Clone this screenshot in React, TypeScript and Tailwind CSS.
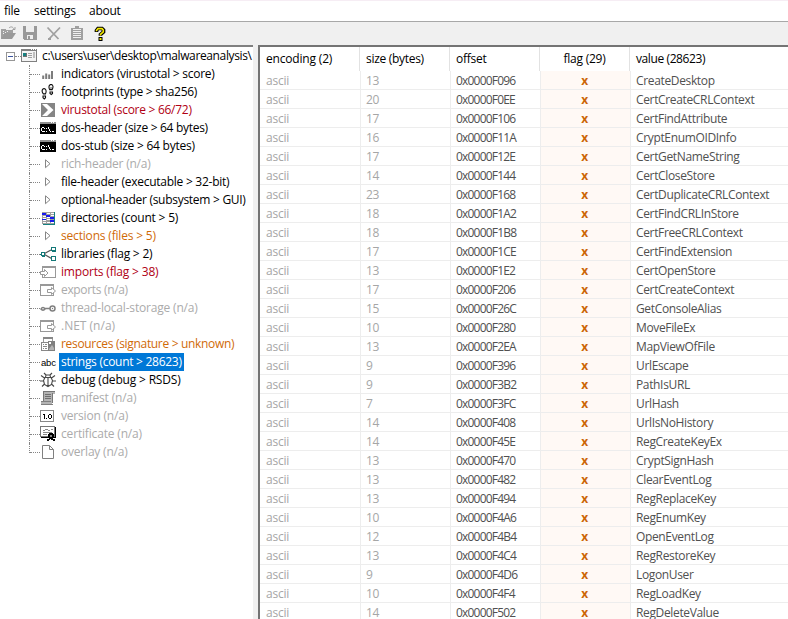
import type { ReactNode } from "react";

const GRAY = "#a0a0a0";

function Svg({ children, crisp = true }: { children: ReactNode; crisp?: boolean }) {
  return (
    <svg width="16" height="16" viewBox="0 0 16 16" fill="none" className="block shrink-0" shapeRendering={crisp ? "crispEdges" : "auto"}>
      {children}
    </svg>
  );
}

function WindowIcon() {
  return (
    <Svg>
      <rect x="0.5" y="1.5" width="15" height="12" fill="#f4f4f4" stroke="#808080" />
      <path d="M0 1h16v2H0z" fill="#808080" />
      <path d="M10 1h1v1h-1zM12 1h1v1h-1zM14 1h1v1h-1z" fill="#fff" />
      <path d="M2 5h3v3H2z" fill="#168080" />
      <path d="M5 5h1v3H5zM2 8h4v1H2z" fill="#707070" />
      <path d="M7 5h4v1H7zM7 7h4v1H7zM7 9h4v1H7z" fill="#a0a0a0" />
      <path d="M12 4h2v6h-2z" fill="#c0c0c0" />
    </Svg>
  );
}
function BarsIcon() {
  return (
    <Svg crisp={false}>
      <path d="M2.2 9.5h2V13h-2zM5.2 7.5h2V13h-2zM8.2 8.5h2V13h-2zM11 5h2v8h-2z" fill="#7c7c7c" />
    </Svg>
  );
}
function FootIcon() {
  return (
    <Svg crisp={false}>
      <path d="M2.8 5.2c-1 1.2-.8 3 .5 4.7h2.2c.8-1.8.9-3.5-.2-4.7-.8-.8-1.8-.8-2.5 0zM3 12h2.5v1.7L4.3 15 3 13.7zM9.8 1c-1.1 1-1 2.8-.2 4.6h2.5c1-1.7 1.2-3.5.2-4.6-.8-.7-1.8-.7-2.5 0zM10 8h2.5v1.5l-1.2 1L10 9.5z" stroke="#111" strokeWidth="1.1" />
      <path d="M10 3h2v2h-2z" fill="#aaa" />
    </Svg>
  );
}
function VtIcon() {
  return (
    <Svg crisp={false}>
      <path d="M1 1h14v14H1z" fill="#858585" />
      <path d="M2 2h5l6.5 6L7 14H2l6-6z" fill="#fff" />
    </Svg>
  );
}
function DosIcon() {
  return (
    <Svg>
      <path d="M0 2h16v12H0z" fill="#000" />
      <path d="M0 2h16v2H0z" fill="#909090" />
      <path d="M11 2h1v1h-1zM13 2h1v1h-1z" fill="#fff" />
      <path d="M2 7h2v1H2zM1 8h1v3H1zM2 11h3v1H2zM4 8h1v1H4zM6 8h1v1H6zM6 11h1v1H6zM8 7h1v2H8zM9 9h1v2H9zM10 11h1v1h-1zM12 11h2v1h-2z" fill="#fff" />
    </Svg>
  );
}
function TriIcon() {
  return (
    <Svg crisp={false}>
      <path d="M5.5 3.8v7.9l4.5-4z" stroke="#858585" strokeWidth="1" fill="#fff" />
    </Svg>
  );
}
function DirIcon() {
  return (
    <Svg>
      <path d="M2 2h13v12H2z" fill="#a0a0a0" />
      <path d="M3 6h3v1H3zM3 8h3v1H3zM3 10h3v1H3zM3 12h3v1H3zM7 3h3v1H7zM7 7h3v1H7zM7 9h3v1H7zM7 12h3v1H7zM11 3h3v1h-3zM11 5h3v1h-3zM11 12h3v1h-3z" fill="#fff" />
      <path d="M2 3h4v2H2zM6 5h4v2H6zM2 9h4v1H2zM10 7h4v2h-4zM10 10h4v2h-4z" fill="#1818ee" />
      <path d="M14 2h1v13H3v-1h11z" fill="#178080" />
    </Svg>
  );
}
function LibIcon() {
  return (
    <Svg>
      <path d="M4.5 7.5L11 4M4.5 8.5l7 4" stroke="#555" strokeWidth="1.3" shapeRendering="auto" />
      <path d="M1.5 6.5h3v3h-3zM11.5 1.5h4v3h-4zM11.5 10.5h4v4h-4z" stroke="#147878" fill="#fff" />
      <path d="M0 8h1v1H0zM12 5h4v1h-4zM2 10h3v1H2z" fill="#147878" />
    </Svg>
  );
}
function ImportIcon() {
  return (
    <Svg>
      <path d="M2.5 2.5h13v11h-13z" stroke="#999" fill="#fff" />
      <path d="M2 2h13v2H2z" fill="#999" />
      <path d="M.5 7.5h4v-2L8 9l-3.5 3.5v-2h-4z" stroke="#999" fill="#fff" shapeRendering="auto" />
    </Svg>
  );
}
function ExportIcon() {
  return (
    <Svg>
      <path d="M.5 2.5h13v11H.5z" stroke="#999" fill="#fff" />
      <path d="M0 2h14v2H0z" fill="#999" />
      <path d="M7.5 7.5h4v-2L15.5 9l-4 3.5v-2h-4z" stroke="#999" fill="#fff" shapeRendering="auto" />
    </Svg>
  );
}
function TlsIcon() {
  return (
    <Svg crisp={false}>
      <path d="M1 9c1-2 3-2 4 0-1 1.5-3 1.5-4 0zM5 8.5h5" stroke="#808080" strokeWidth="1.5" />
      <circle cx="12.5" cy="8.5" r="2.5" stroke="#808080" strokeWidth="1.5" />
      <circle cx="12.5" cy="8.5" r="0.7" fill="#808080" />
    </Svg>
  );
}
function ResIcon() {
  return (
    <Svg>
      <path d="M3.5 1.5h9v6h-9z" stroke="#999" fill="#fff" />
      <path d="M3 1h10v2H3z" fill="#888" />
      <path d="M1.5 6.5h7v8h-7z" stroke="#888" fill="#fff" />
      <path d="M3 8h1v1H3zM5 8h2v1H5zM3 10h4v1H3zM3 12h1v1H3zM5 12h2v1H5z" fill="#888" />
      <path d="M8 5h7v10H8z" fill="#808080" />
      <path d="M9 13l3-4 2 3v2H9z" fill="#b4b4b4" shapeRendering="auto" />
      <path d="M9 6h2v2H9z" fill="#fff" />
    </Svg>
  );
}
function AbcIcon() {
  return (
    <span className="block w-4 shrink-0 whitespace-nowrap pl-px pt-px font-['Liberation_Sans',sans-serif] text-[9.5px] leading-4 tracking-[-0.2px] text-black">abc</span>
  );
}
function BugIcon() {
  return (
    <Svg crisp={false}>
      <path d="M5 5.5h6l1.500 3-1 4-3.500 2-3.500-2-1-4zM5.500 5L6 3h4l.5 2M6 3L4 1M10 3l2-2M8 6v8M4.500 6L1 3.500M11.500 6L15 3.500M3.500 9H0M12.500 9H16M4.500 12L2 14.500M11.500 12l2.500 2.500" stroke="#484848" strokeWidth="1.1" />
    </Svg>
  );
}
function ManifestIcon() {
  return (
    <Svg>
      <path d="M3 1h12v3h-2v7H3z" fill="#b4b4b4" />
      <path d="M3 1h12v1H3zM3 2h1v9H3zM12 3h1v10h-1z" fill="#777" />
      <path d="M5 4h6v1H5zM5 6h6v1H5zM5 8h6v1H5z" fill="#707070" />
      <path d="M1 11h11v3H1z" fill="#b4b4b4" />
      <path d="M1 11h10v1H1zM1 14h12v1H1z" fill="#808080" />
    </Svg>
  );
}
function VersionIcon() {
  return (
    <Svg>
      <path d="M.5 2.5h13v11H.5z" fill="#fff" stroke="#888" />
      <path d="M3 6h2v5H4V7H3zM6 10h1v1H6zM9 6h2v1H9zM8 7h1v3H8zM11 7h1v3h-1zM9 10h2v1H9z" fill="#000" />
    </Svg>
  );
}
function CertIcon() {
  return (
    <Svg>
      <path d="M.5 .5h14v10H.5z" fill="#fff" stroke="#777" />
      <path d="M15 1h1v11h-1zM1 11h15v1H1z" fill="#000" />
      <path d="M3 4h2v1H3zM5 3h3v1H5zM8 4h2v1H8zM11 3h2v1h-2zM3 6h9v1H3zM3 8h4v1H3z" fill="#888" />
      <path d="M9 7h4v1h1v4h-1v1h2v2h-2v-1h-2v-1h-1v1H9v1H7v-2h2v-1H8V8h1z" fill="#000" />
      <path d="M10 9h2v2h-2z" fill="#888" />
    </Svg>
  );
}
function PageIcon() {
  return (
    <Svg crisp={false}>
      <path d="M2.5 1.5h7l4 4v9h-11zM9.5 1.5v4h4" fill="#fff" stroke="#808080" />
    </Svg>
  );
}

type Node = [string, () => ReactNode, string, string];
const BLACK = "text-black";
const DIM = "text-[#ababab]";
const RED = "text-[#b00014]";
const ORANGE = "text-[#d06a08]";

const nodes: Node[] = [
  ["indicators (virustotal > score)", BarsIcon, BLACK, "tracking-[-0.25px]"],
  ["footprints (type > sha256)", FootIcon, BLACK, "tracking-[-0.28px]"],
  ["virustotal (score > 66/72)", VtIcon, RED, "tracking-[-0.28px]"],
  ["dos-header (size > 64 bytes)", DosIcon, BLACK, "tracking-[-0.3px]"],
  ["dos-stub (size > 64 bytes)", DosIcon, BLACK, "tracking-[-0.25px]"],
  ["rich-header (n/a)", TriIcon, DIM, "tracking-[-0.22px]"],
  ["file-header (executable > 32-bit)", TriIcon, BLACK, "tracking-[-0.26px]"],
  ["optional-header (subsystem > GUI)", TriIcon, BLACK, "tracking-[-0.28px]"],
  ["directories (count > 5)", DirIcon, BLACK, "tracking-[-0.2px]"],
  ["sections (files > 5)", TriIcon, ORANGE, "tracking-[-0.18px]"],
  ["libraries (flag > 2)", LibIcon, BLACK, "tracking-[-0.22px]"],
  ["imports (flag > 38)", ImportIcon, RED, "tracking-[-0.18px]"],
  ["exports (n/a)", ExportIcon, DIM, "tracking-[-0.33px]"],
  ["thread-local-storage (n/a)", TlsIcon, DIM, "tracking-[-0.18px]"],
  [".NET (n/a)", ExportIcon, DIM, "tracking-[0px]"],
  ["resources (signature > unknown)", ResIcon, ORANGE, "tracking-[-0.32px]"],
  ["strings (count > 28623)", AbcIcon, "text-white", "tracking-[-0.28px]"],
  ["debug (debug > RSDS)", BugIcon, BLACK, "tracking-[-0.18px]"],
  ["manifest (n/a)", ManifestIcon, DIM, "tracking-[-0.15px]"],
  ["version (n/a)", VersionIcon, DIM, "tracking-[-0.2px]"],
  ["certificate (n/a)", CertIcon, DIM, "tracking-[-0.17px]"],
  ["overlay (n/a)", PageIcon, DIM, "tracking-[-0.2px]"],
];

const rows: [number, string, string][] = [
  [13, "F096", "CreateDesktop"],
  [20, "F0EE", "CertCreateCRLContext"],
  [17, "F106", "CertFindAttribute"],
  [16, "F11A", "CryptEnumOIDInfo"],
  [17, "F12E", "CertGetNameString"],
  [14, "F144", "CertCloseStore"],
  [23, "F168", "CertDuplicateCRLContext"],
  [18, "F1A2", "CertFindCRLInStore"],
  [18, "F1B8", "CertFreeCRLContext"],
  [17, "F1CE", "CertFindExtension"],
  [13, "F1E2", "CertOpenStore"],
  [17, "F206", "CertCreateContext"],
  [15, "F26C", "GetConsoleAlias"],
  [10, "F280", "MoveFileEx"],
  [13, "F2EA", "MapViewOfFile"],
  [9, "F396", "UrlEscape"],
  [9, "F3B2", "PathIsURL"],
  [7, "F3FC", "UrlHash"],
  [14, "F408", "UrlIsNoHistory"],
  [14, "F45E", "RegCreateKeyEx"],
  [13, "F470", "CryptSignHash"],
  [13, "F482", "ClearEventLog"],
  [13, "F494", "RegReplaceKey"],
  [10, "F4A6", "RegEnumKey"],
  [12, "F4B4", "OpenEventLog"],
  [13, "F4C4", "RegRestoreKey"],
  [9, "F4D6", "LogonUser"],
  [10, "F4F4", "RegLoadKey"],
  [14, "F502", "RegDeleteValue"],
];

function Toolbar() {
  return (
    <div className="flex h-[23px] shrink-0 items-start gap-[7px] bg-[#f0f0f0] pt-[4px]">
      <Svg>
        <path d="M1 3h4l1 1h7v4H5l-3 5H1z" fill={GRAY} />
        <path d="M5 7h11l-4 6H1z" fill="#999" shapeRendering="auto" />
        <path d="M9 2c2-2 4-1 5 1M12.5 3.500H15V1" stroke={GRAY} shapeRendering="auto" />
        <path d="M3 5h1v1H3zM5 6h1v1H5zM7 5h1v1H7zM3 7h1v1H3z" fill="#eee" />
      </Svg>
      <Svg>
        <path d="M0 0h14v14H1l-1-1z" fill="#999" />
        <path d="M3 0h8v6H3zM4 9h6v4H4z" fill="#eee" />
        <path d="M5 10h2v3H5z" fill="#999" />
      </Svg>
      <Svg crisp={false}>
        <path d="M1.5 1.500l11 11.500M14 1.500L3 13" stroke={GRAY} strokeWidth="1.8" />
        <path d="M2 12h3v2H2z" fill={GRAY} />
      </Svg>
      <Svg>
        <path d="M2 2h12v12H2z" fill={GRAY} />
        <path d="M6 0h4v2H6z" fill={GRAY} />
        <path d="M4 3h8v1H4zM4 5h8v1H4zM4 7h8v1H4zM4 9h8v1H4zM4 11h8v1H4z" fill="#f0f0f0" />
      </Svg>
      <Svg crisp={false}>
        <path d="M4.500 6V4.500L6 2.500h4L11.500 4v2L8.500 8.500v1.200" stroke="#000" strokeWidth="3.700" />
        <path d="M6.500 11h4v4h-4z" fill="#000" />
        <path d="M4.500 5.300V4.500L6 2.600h4L11.300 4v1.800L8.500 8.300v1.200" stroke="#f5eb00" strokeWidth="1.600" />
        <path d="M7.500 12h2v2h-2z" fill="#f5eb00" />
      </Svg>
    </div>
  );
}

function Tree() {
  return (
    <div className="w-[253px] shrink-0 border-t-2 border-[#808080] bg-white">
      <div className="flex h-[18px] items-center whitespace-nowrap pl-[6px] leading-[18px]">
        <span className="flex size-[9px] shrink-0 items-center justify-center border border-[#969696]">
          <span className="h-px w-[5px] bg-[#3b55a0]" />
        </span>
        <span className="w-[6px] shrink-0 border-t border-dotted border-[#858585]" />
        <WindowIcon />
        <span className="pl-[5px] tracking-[-0.37px]">c:\users\user\desktop\malwareanalysis\</span>
      </div>
      {nodes.map(([label, Icon, color, tracking], i) => (
        <div key={label} className="flex h-[18px] items-center whitespace-nowrap pl-[29px] leading-[18px]">
          <span className={`flex shrink-0 self-start border-l border-dotted border-[#858585] ${i === nodes.length - 1 ? "h-[10px] items-end" : "h-[18px] items-center"}`}>
            <span className="w-[10px] border-t border-dotted border-[#858585]" />
          </span>
          <Icon />
          <span className={`ml-[3px] h-[18px] px-[2px] ${color} ${tracking} ${color === "text-white" ? "bg-[#0078d7]" : ""}`}>{label}</span>
        </div>
      ))}
    </div>
  );
}

const CELL = "h-[19px] border-b border-[#ededed]";

function Table() {
  return (
    <div className="min-w-0 grow overflow-hidden border-t-2 border-l-2 border-[#747474] bg-white">
      <div className="grid h-[24px] grid-cols-[100px_90px_90px_90px_1fr] whitespace-nowrap leading-[24px]">
        <span className="border-r border-[#e2e2e2] pl-[6px] tracking-[-0.18px]">encoding (2)</span>
        <span className="border-r border-[#e2e2e2] pl-[6px] tracking-[-0.3px]">size (bytes)</span>
        <span className="border-r border-[#e2e2e2] pl-[6px]">offset</span>
        <span className="border-r border-[#e2e2e2] text-center">flag (29)</span>
        <span className="pl-[6px] tracking-[-0.4px]">value (28623)</span>
      </div>
      {rows.map(([size, offset, value]) => (
        <div key={offset} className="grid h-[19px] grid-cols-[101px_90px_90px_90px_1fr] leading-[19px] text-[#505050]">
          <span className={`${CELL} border-r pl-[6px] text-[#a6a6a6]`}>ascii</span>
          <span className={`${CELL} border-r pl-[5px] text-[#a6a6a6]`}>{size}</span>
          <span className={`${CELL} border-r pl-[5px] tracking-[-0.8px]`}>0x0000{offset}</span>
          <span className={`${CELL} border-r bg-[#fff9f5] pr-[2px] text-center font-bold text-[#cc6606]`}>x</span>
          <span className={`${CELL} pl-[5px] tracking-[-0.35px]`}>{value}</span>
        </div>
      ))}
    </div>
  );
}

export default function App() {
  return (
    <div className="flex h-[619px] w-[788px] flex-col overflow-hidden bg-[#f0f0f0] font-['Open_Sans','Noto_Sans',sans-serif] text-[12px] tracking-[-0.25px] text-black">
      <div className="flex h-[22px] shrink-0 border-t border-b border-t-[#f6edf4] border-b-[#a8a8a8] bg-white pl-1 leading-[20px]">
        <span className="w-[30px]">file</span>
        <span className="w-[55px]">settings</span>
        <span>about</span>
      </div>
      <Toolbar />
      <div className="flex min-h-0 grow">
        <Tree />
        <div className="w-[5px] shrink-0 bg-[#f0f0f0]" />
        <Table />
      </div>
    </div>
  );
}
